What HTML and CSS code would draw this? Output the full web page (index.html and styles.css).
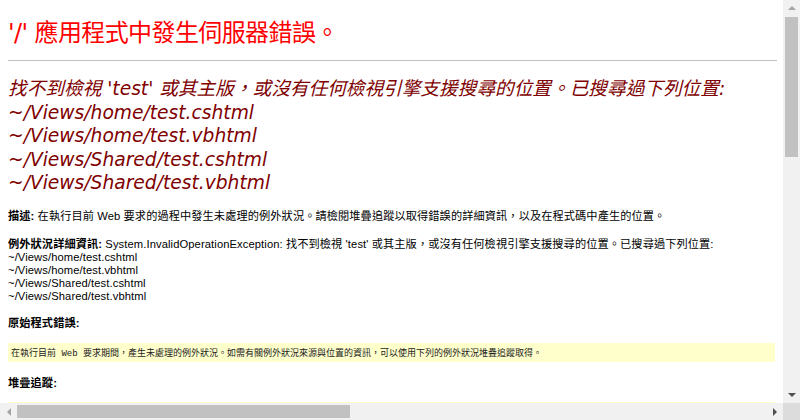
FILE: index.html
```html
<!DOCTYPE html>
<html lang="zh-Hant">
<head>
<meta charset="utf-8">
<title>伺服器錯誤</title>
<link rel="stylesheet" href="styles.css">
</head>
<body>
<div class="window">
  <div class="viewport">
    <div class="page">
      <h1 class="title">'/' 應用程式中發生伺服器錯誤。</h1>
      <hr class="rule">
      <h2 class="subtitle">找不到檢視 'test' 或其主版，或沒有任何檢視引擎支援搜尋的位置。已搜尋過下列位置:<br>~/Views/home/test.cshtml<br>~/Views/home/test.vbhtml<br>~/Views/Shared/test.cshtml<br>~/Views/Shared/test.vbhtml</h2>
      <p class="desc"><b>描述: </b>在執行目前 Web 要求的過程中發生未處理的例外狀況。請檢閱堆疊追蹤以取得錯誤的詳細資訊，以及在程式碼中產生的位置。</p>
      <p class="detail"><b>例外狀況詳細資訊: </b>System.InvalidOperationException: 找不到檢視 'test' 或其主版，或沒有任何檢視引擎支援搜尋的位置。已搜尋過下列位置:<br>~/Views/home/test.cshtml<br>~/Views/home/test.vbhtml<br>~/Views/Shared/test.cshtml<br>~/Views/Shared/test.vbhtml</p>
      <p class="label"><b>原始程式錯誤:</b></p>
      <div class="codebox first"><code>在執行目前 Web 要求期間，產生未處理的例外狀況。如需有關例外狀況來源與位置的資訊，可以使用下列的例外狀況堆疊追蹤取得。</code></div>
      <p class="label stack"><b>堆疊追蹤:</b></p>
      <div class="codebox second"></div>
    </div>
  </div>
  <div class="vscroll">
    <div class="sbtn"><span class="arrow up"></span></div>
    <div class="vtrack"><div class="vthumb"></div></div>
    <div class="sbtn"><span class="arrow down"></span></div>
  </div>
  <div class="hscroll">
    <div class="sbtn"><span class="arrow left"></span></div>
    <div class="htrack"><div class="hthumb"></div></div>
    <div class="sbtn"><span class="arrow right"></span></div>
  </div>
  <div class="corner"></div>
</div>
</body>
</html>
```
FILE: styles.css
```css
html, body {
  margin: 0;
  padding: 0;
  overflow: hidden;
  background: #fff;
}

.window {
  width: 800px;
  height: 420px;
  display: grid;
  grid-template-columns: 783px 17px;
  grid-template-rows: 403px 17px;
}

.viewport {
  overflow: hidden;
  background: #fff;
}

.page {
  padding: 8px 8px 0 8px;
  font-family: "Liberation Sans", "Noto Sans CJK TC", sans-serif;
  font-size: 11.2px;
  color: #000;
}

.title {
  margin: 10px 0 0;
  font-family: "DejaVu Sans", "Noto Sans CJK TC", sans-serif;
  font-weight: normal;
  font-size: 24px;
  line-height: 30px;
  letter-spacing: -0.6px;
  color: #ff0000;
  white-space: nowrap;
}

.rule {
  margin: 12px -2px 0 0;
  border: 0;
  height: 1px;
  background: #c0c0c0;
}

.subtitle {
  margin: 16px 0 0;
  font-family: "DejaVu Sans", "Noto Sans CJK TC", sans-serif;
  font-weight: normal;
  font-style: italic;
  font-size: 18.67px;
  line-height: 23.5px;
  color: #800000;
  white-space: nowrap;
}

.desc, .detail, .label {
  margin: 15px 0 0;
  line-height: 13px;
  letter-spacing: 0.1px;
  white-space: nowrap;
}

.label {
  margin-top: 14px;
}

.label.stack {
  margin-top: 14.5px;
}

.codebox {
  background: #ffffcc;
  height: 19px;
  padding: 0 3px;
  display: flex;
  align-items: center;
  white-space: nowrap;
  overflow: hidden;
}

.codebox.first {
  margin-top: 13.5px;
}

.codebox.second {
  margin-top: 12.5px;
  height: 60px;
}

.codebox code {
  font-family: "Liberation Mono", "Noto Sans CJK TC", monospace;
  font-size: 9px;
  color: #222;
}

/* scrollbars */
.vscroll {
  background: #f1f1f1;
  display: flex;
  flex-direction: column;
}

.hscroll {
  background: #f1f1f1;
  display: flex;
}

.sbtn {
  width: 17px;
  height: 17px;
  flex: none;
  display: flex;
  align-items: center;
  justify-content: center;
}

.vtrack {
  flex: 1;
  padding: 0 2px;
}

.vthumb {
  height: 140px;
  background: #c1c1c1;
}

.htrack {
  flex: 1;
  padding: 2px 0;
}

.hthumb {
  width: 333px;
  height: 13px;
  background: #c1c1c1;
}

.corner {
  background: #dcdcdc;
}

.arrow {
  width: 0;
  height: 0;
  border-style: solid;
}

.arrow.up {
  border-width: 0 4px 4px 4px;
  border-color: transparent transparent #a3a3a3 transparent;
  margin-top: -1px;
}

.arrow.down {
  border-width: 4px 4px 0 4px;
  border-color: #505050 transparent transparent transparent;
}

.arrow.left {
  border-width: 4px 4px 4px 0;
  border-color: transparent #a3a3a3 transparent transparent;
}

.arrow.right {
  border-width: 4px 0 4px 4px;
  border-color: transparent transparent transparent #505050;
}
```
